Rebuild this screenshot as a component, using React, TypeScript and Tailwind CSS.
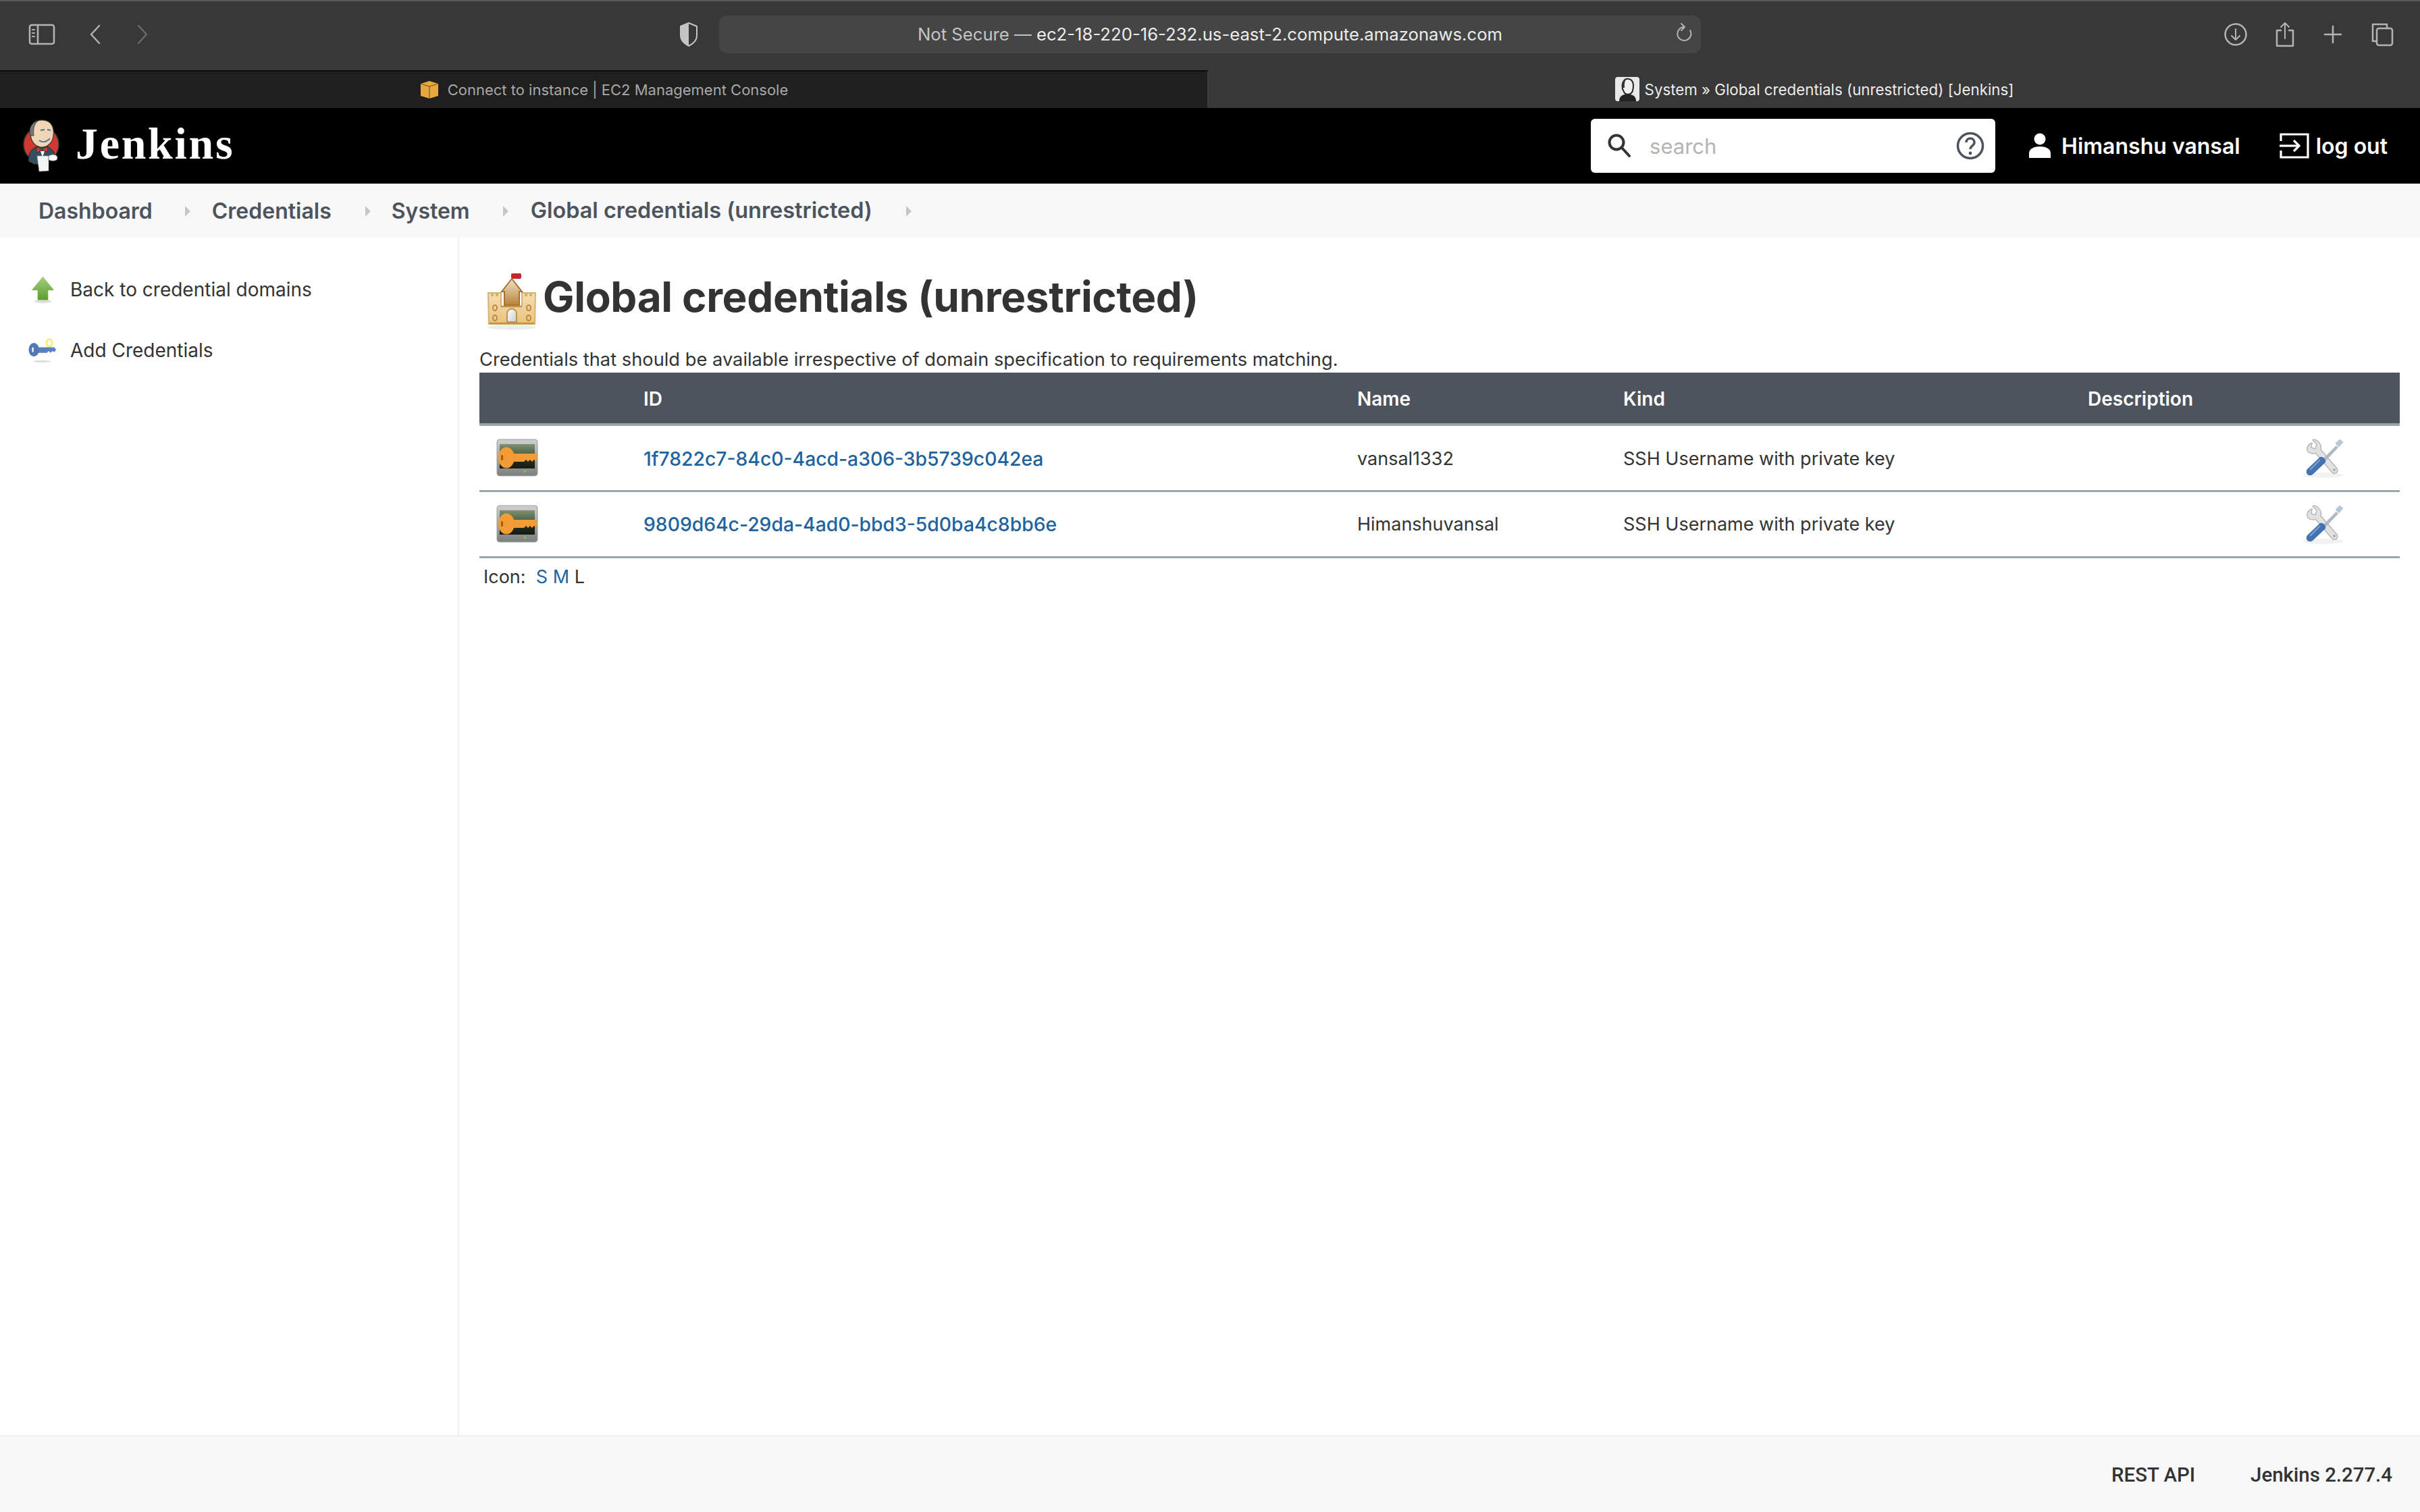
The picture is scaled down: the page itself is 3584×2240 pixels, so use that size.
import React from "react";

const Chev = () => (
  <svg width="8" height="16" viewBox="0 0 8 16" className="shrink-0"><path d="M0 0 L8 8 L0 16 Z" fill="#c4c7ca" /></svg>
);

const Jenkins = ({ w = 54, h = 78 }: { w?: number; h?: number }) => (
  <svg width={w} height={h} viewBox="0 0 54 78">
    <circle cx="27" cy="37" r="26" fill="#d33833" stroke="#3a3a3a" strokeWidth="1.5" />
    <path d="M8 62 C8 48 14 42 22 40 L36 40 C44 44 48 50 47 56 L38 60 L36 68 L16 66 Z" fill="#335061" stroke="#222" strokeWidth="1" />
    <path d="M11 22 C9 8 18 0 30 1 C42 2 47 12 45 24 C44 34 36 42 26 41 C17 39 12 32 11 22 Z" fill="#f0d6b7" stroke="#333" strokeWidth="1.2" />
    <path d="M11 24 C8 14 12 4 24 1 C16 6 15 14 16 24 Z" fill="#777" stroke="#333" strokeWidth="0.8" />
    <path d="M24 31 C29 35 36 33 40 28 M26 16 l6 -1 M36 15 l5 1" stroke="#49728b" strokeWidth="1.8" fill="none" />
    <path d="M20 40 L28 45 L36 40 L37 48 L28 46 L20 49 Z" fill="#d33833" stroke="#222" strokeWidth="0.6" />
    <path d="M26 47 L32 47 L29 56 Z" fill="#fff" />
    <path d="M21 54 L38 54 L38 76 L24 77 Z" fill="#f4f4f4" stroke="#999" strokeWidth="0.6" />
    <path d="M38 54 C44 50 52 52 51 58 C50 62 43 62 38 60 Z" fill="#fff" stroke="#666" strokeWidth="0.8" />
  </svg>
);

const BackArrow = () => (
  <svg width="42" height="44" viewBox="0 0 42 44" className="blur-[0.5px]">
    <defs>
      <linearGradient id="ag" x1="0" y1="0" x2="0" y2="1"><stop offset="0" stopColor="#a5cf7f" /><stop offset="1" stopColor="#5c9e2e" /></linearGradient>
    </defs>
    <ellipse cx="21" cy="40" rx="13" ry="2.5" fill="#ddd" />
    <path d="M21 2 L38 23 L29 23 L29 38 L13 38 L13 23 L4 23 Z" fill="url(#ag)" />
  </svg>
);

const KeyIcon = () => (
  <svg width="46" height="44" viewBox="0 0 46 44" className="blur-[0.5px]">
    <ellipse cx="22" cy="40" rx="14" ry="1.8" fill="#ddd" />
    <ellipse cx="34" cy="10" rx="4.5" ry="6" fill="#fff" stroke="#f4ee70" strokeWidth="3" />
    <path d="M14 17 L42 17 L45 21 L42 25 L39 23 L36 26 L33 23 L30 26 L14 26 Z" fill="#5a82c0" />
    <ellipse cx="9" cy="21" rx="8.5" ry="11" fill="#5378b6" />
    <rect x="6" y="17" width="2.5" height="8" rx="1.2" fill="#fff" />
  </svg>
);

const Castle = () => (
  <svg width="76" height="88" viewBox="0 0 76 88" className="blur-[0.5px]">
    <defs>
      <linearGradient id="cg" x1="0" y1="0" x2="0" y2="1"><stop offset="0" stopColor="#f2e4cc" /><stop offset="1" stopColor="#b98238" /></linearGradient>
      <linearGradient id="cb" x1="0" y1="0" x2="0" y2="1"><stop offset="0" stopColor="#f5deb0" /><stop offset="1" stopColor="#e9c47f" /></linearGradient>
      <linearGradient id="cd" x1="0" y1="0" x2="1" y2="1"><stop offset="0" stopColor="#ffffff" /><stop offset="1" stopColor="#c9cdd0" /></linearGradient>
    </defs>
    <ellipse cx="38" cy="83" rx="36" ry="3.5" fill="#eceeed" />
    <rect x="37" y="3" width="15" height="8" rx="2" fill="#c8242a" />
    <path d="M38 11 L53 30 L49 30 L49 50 L27 50 L27 30 L23 30 Z" fill="url(#cg)" stroke="#a8732d" strokeWidth="2" />
    <path d="M3 32 L8 32 L8 36 L10 36 L10 32 L15 32 L15 36 L17 36 L17 32 L22 32 L22 52 L53 52 L53 32 L58 32 L58 36 L60 36 L60 32 L65 32 L65 36 L67 36 L67 32 L73 32 L72 78 L4 78 Z" fill="url(#cb)" stroke="#dcb06a" strokeWidth="2" />
    <path d="M22 52 L53 52" stroke="#c4924a" strokeWidth="2.5" />
    <path d="M5 77 L71 77" stroke="#c4924a" strokeWidth="2.5" />
    <path d="M31 75 L31 63 C31 53 45 53 45 63 L45 75 Z" fill="url(#cd)" stroke="#c4924a" strokeWidth="2" />
    <ellipse cx="13" cy="54" rx="3" ry="4" fill="none" stroke="#ba8a43" strokeWidth="2" />
    <ellipse cx="63" cy="54" rx="3" ry="4" fill="none" stroke="#ba8a43" strokeWidth="2" />
    <ellipse cx="13" cy="69" rx="3" ry="4" fill="none" stroke="#ba8a43" strokeWidth="2" />
    <ellipse cx="63" cy="69" rx="3" ry="4" fill="none" stroke="#ba8a43" strokeWidth="2" />
  </svg>
);

const SshKey = ({ id }: { id: string }) => (
  <svg width="62" height="56" viewBox="0 0 62 56" className="blur-[0.5px]">
    <defs>
      <linearGradient id={`sg${id}`} x1="0" y1="0" x2="0" y2="1"><stop offset="0" stopColor="#7f9172" /><stop offset="0.35" stopColor="#566a4c" /><stop offset="0.6" stopColor="#26321f" /><stop offset="1" stopColor="#141a10" /></linearGradient>
      <linearGradient id={`sf${id}`} x1="0" y1="0" x2="0" y2="1"><stop offset="0" stopColor="#cfcfcf" /><stop offset="1" stopColor="#7b807d" /></linearGradient>
    </defs>
    <rect x="1" y="1" width="60" height="54" rx="4" fill={`url(#sf${id})`} stroke="#9b9d9c" strokeWidth="1" />
    <rect x="5" y="8" width="52" height="36" fill={`url(#sg${id})`} />
    <rect x="41" y="47" width="3" height="3" fill="#8db56b" />
    <path d="M18 22 L60 22 L61 28 L59 33 L56 31 L53 34 L50 31 L47 34 L44 31 L41 34 L18 34 Z" fill="#f39b34" />
    <ellipse cx="15" cy="28" rx="12" ry="15.5" fill="#f39b34" />
    <rect x="7" y="24" width="3" height="8" rx="1.5" fill="#9a5d18" />
  </svg>
);

const Tools = () => (
  <svg width="62" height="62" viewBox="0 0 62 62" className="blur-[0.6px]">
    <ellipse cx="31" cy="55" rx="30" ry="4" fill="#f2f2f2" />
    <path d="M14 7 C8 9 5 15 8 20 C11 23 16 24 19 22 L43 50 C47 55 54 51 51 45 L27 17 C29 11 24 3 17 2 L15 3 L21 9 L19 16 L13 14 Z" fill="#e2e2e2" stroke="#b9b9b9" strokeWidth="1.5" />
    <circle cx="47" cy="47" r="2" fill="#aaa" />
    <path d="M29 32 L50 11 L53 14 L32 36 Z" fill="#aeb9c4" />
    <path d="M49 8 L55 2 L60 6 L54 13 Z" fill="#b4c8dc" stroke="#9ab" strokeWidth="0.5" />
    <path d="M7 46 L26 28 C30 27 35 31 34 36 L15 54 C9 58 3 52 7 46 Z" fill="#4374b0" />
    <path d="M11 47 L26 32" stroke="#7ba6d4" strokeWidth="2" />
  </svg>
);

const IconGlyph = ({ children, w, h }: { children: React.ReactNode; w: number; h: number }) => (
  <svg width={w} height={h} viewBox={`0 0 ${w} ${h}`} fill="none" stroke="#b4b4b4" strokeWidth="2.5" strokeLinecap="round" strokeLinejoin="round">{children}</svg>
);

const rows = [
  { id: "1f7822c7-84c0-4acd-a306-3b5739c042ea", name: "vansal1332" },
  { id: "9809d64c-29da-4ad0-bbd3-5d0ba4c8bb6e", name: "Himanshuvansal" },
];

export default function App() {
  return (
    <div className="w-[3584px] h-[2240px] flex flex-col bg-white overflow-hidden text-[#333] font-['Inter','Liberation_Sans',sans-serif]">
      {/* browser toolbar */}
      <div className="h-[104px] bg-[#383838] border-t-2 border-[#5a5a5a] flex items-center pl-[42px] pr-[39px] shrink-0">
        <div className="flex items-center w-[1023px] -mt-[4px]">
          <IconGlyph w={40} h={32}>
            <rect x="2" y="2" width="36" height="28" rx="3" />
            <path d="M14 2 L14 30" />
            <path d="M6 9 L9 9 M6 14 L9 14 M6 19 L9 19" strokeWidth="2" />
          </IconGlyph>
          <div className="ml-[50px]">
            <IconGlyph w={18} h={30}><path d="M15 2 L3 15 L15 28" /></IconGlyph>
          </div>
          <div className="ml-[52px]">
            <svg width="18" height="30" viewBox="0 0 18 30" fill="none" stroke="#6a6a6a" strokeWidth="2.5" strokeLinecap="round" strokeLinejoin="round"><path d="M3 2 L15 15 L3 28" /></svg>
          </div>
          <div className="ml-auto mr-[31px]">
            <svg width="28" height="36" viewBox="0 0 28 36"><path d="M14 1 L26 6 L26 20 C26 27 20 32 14 35 C8 32 2 27 2 20 L2 6 Z" fill="#383838" stroke="#c4c4c4" strokeWidth="2" /><path d="M14 1 L2 6 L2 20 C2 27 8 32 14 35 Z" fill="#c4c4c4" /></svg>
          </div>
        </div>
        <div className="w-[1454px] h-[56px] rounded-[12px] bg-[#454545] flex items-center relative -mt-[4px]">
          <div className="flex-1 text-center text-[25.7px] whitespace-nowrap">
            <span className="text-[#c4c4c4]">Not Secure — </span><span className="text-[#ececec]">ec2-18-220-16-232.us-east-2.compute.amazonaws.com</span>
          </div>
          <div className="absolute right-[13px] top-[10px]">
            <IconGlyph w={24} h={30}>
              <path d="M12 7 A10 10 0 1 0 21 12" strokeWidth="2" />
              <path d="M8 2 L13 7 L8 12" strokeWidth="2" />
            </IconGlyph>
          </div>
        </div>
        <div className="flex-1 flex items-center justify-end gap-[41px] -mt-[4px]">
          <IconGlyph w={34} h={34}><circle cx="17" cy="17" r="15.5" /><path d="M17 9 L17 25 M11 19 L17 25 L23 19" strokeWidth="2" /></IconGlyph>
          <IconGlyph w={30} h={38}><path d="M9 13 L3 13 L3 36 L27 36 L27 13 L21 13" /><path d="M15 2 L15 25 M9 8 L15 2 L21 8" strokeWidth="2" /></IconGlyph>
          <IconGlyph w={30} h={30}><path d="M15 3 L15 27 M3 15 L27 15" /></IconGlyph>
          <IconGlyph w={34} h={36}><path d="M8 28 L3 28 L3 3 L24 3 L24 9" /><rect x="9" y="9" width="23" height="25" rx="3" /></IconGlyph>
        </div>
      </div>

      {/* tabs */}
      <div className="h-[56px] flex shrink-0 text-[22px]">
        <div className="w-[1790px] bg-[#1f1f1f] border-t-2 border-[#0d0d0d] border-r-2 border-r-[#3d3d3d] flex items-center justify-center gap-[12px] text-[#a8a8a8]">
          <svg width="30" height="28" viewBox="0 0 30 28"><path d="M2 5 L15 1 L28 5 L28 23 L15 27 L2 23 Z" fill="#e7a93c" /><path d="M2 5 L15 9 L28 5 M15 9 L15 27" stroke="#7a5a1c" strokeWidth="1.2" fill="none" /></svg>
          <span>Connect to instance | EC2 Management Console</span>
        </div>
        <div className="flex-1 bg-[#383838] flex items-center justify-center gap-[8px] text-[#ececec] text-[22.3px]">
          <div className="w-[36px] h-[36px] rounded-[4px] bg-[#e8e8e8] overflow-hidden flex justify-center items-end">
            <svg width="30" height="36" viewBox="0 0 30 36"><path d="M8 18 C6 6 12 2 17 3 C24 4 25 12 23 20 C22 26 14 27 11 24 Z" fill="#eee" stroke="#222" strokeWidth="2" /><path d="M3 36 C3 28 9 26 12 26 L20 26 C25 27 28 30 28 36 Z" fill="#222" /><path d="M8 16 C6 8 9 4 14 3 C10 7 11 12 11 16Z" fill="#333" /></svg>
          </div>
          <span className="mt-[1px]">System » Global credentials (unrestricted) [Jenkins]</span>
        </div>
      </div>

      {/* jenkins header */}
      <div className="h-[112px] bg-black flex items-center shrink-0 pl-[34px] pr-[48px] text-white">
        <Jenkins />
        <span className="ml-[24px] -mt-[6px] text-[66px] leading-none font-bold font-['Liberation_Serif',serif] tracking-[2.7px]">Jenkins</span>
        <div className="ml-auto w-[599px] h-[80px] bg-white rounded-[6px] flex items-center pl-[22px] pr-[16px]">
          <svg width="40" height="40" viewBox="0 0 40 40" fill="none" stroke="#333" strokeWidth="4" strokeLinecap="round"><circle cx="16" cy="15" r="10.5" /><path d="M24 23 L35 35" /></svg>
          <span className="ml-[25px] mt-[2px] text-[31px] text-[#b4b4b4]">search</span>
          <svg className="ml-auto" width="42" height="42" viewBox="0 0 42 42" fill="none"><circle cx="21" cy="21" r="18.5" stroke="#4d545d" strokeWidth="3.5" /><path d="M15 16 C15 8 27 8 27 16 C27 21 21 21 21 26" stroke="#4d545d" strokeWidth="3.5" /><circle cx="21" cy="32" r="2.4" fill="#4d545d" /></svg>
        </div>
        <div className="ml-[50px] flex items-center gap-[16px] text-[32px] font-semibold">
          <svg width="32" height="38" viewBox="0 0 32 38" fill="#fff"><circle cx="16" cy="9" r="8.5" /><path d="M0 37 L0 30 C0 23 8 20 16 20 C24 20 32 23 32 30 L32 37 Z" /></svg>
          <span className="mt-[1px]">Himanshu vansal</span>
        </div>
        <div className="ml-[58px] flex items-center gap-[10px] text-[32px] font-semibold">
          <svg width="44" height="40" viewBox="0 0 44 40" fill="none" stroke="#fff" strokeWidth="3.2"><path d="M2 13 L2 3 L42 3 L42 37 L2 37 L2 27" /><path d="M0 20 L28 20" /><path d="M21 12 L29 20 L21 28" /></svg>
          <span className="mt-[1px]">log out</span>
        </div>
      </div>

      {/* breadcrumb */}
      <div className="h-[80px] pt-[1px] bg-[#f8f8f8] flex items-center shrink-0 pl-[57px] text-[32px] font-semibold text-[#4d545d]">
        <span>Dashboard</span>
        <span className="ml-[48px]"><Chev /></span>
        <span className="ml-[32px]">Credentials</span>
        <span className="ml-[50px]"><Chev /></span>
        <span className="ml-[31px]">System</span>
        <span className="ml-[49px]"><Chev /></span>
        <span className="ml-[33px] text-[32.4px]">Global credentials (unrestricted)</span>
        <span className="ml-[50px]"><Chev /></span>
      </div>

      {/* body */}
      <div className="flex-1 flex min-h-0">
        <div className="w-[680px] shrink-0 border-r-2 border-[#f0f0f0] pt-[55px] pl-[40px] text-[28px]">
          <div className="h-[44px] flex items-center gap-[20px]"><div className="w-[44px] flex justify-center pl-[3px]"><BackArrow /></div><span>Back to credential domains</span></div>
          <div className="h-[44px] mt-[46px] flex items-center gap-[20px]"><div className="w-[44px] flex justify-start pl-[2px]"><KeyIcon /></div><span>Add Credentials</span></div>
        </div>
        <div className="flex-1 pl-[30px] pr-[30px] min-w-0">
          <div className="flex items-center h-[100px] mt-[38px] pl-[10px] gap-[8px]">
            <div className="mt-[12px]"><Castle /></div>
            <h1 className="text-[62px] font-bold text-[#333] leading-none tracking-[-0.35px]">Global credentials (unrestricted)</h1>
          </div>
          <div className="text-[27.27px] mt-[22px] leading-[42px] h-[40px]">Credentials that should be available irrespective of domain specification to requirements matching.</div>
          <table className="w-full table-fixed border-collapse text-[27px]">
            <thead>
              <tr className="h-[77px] bg-[#4d545d] text-white border-b-[4px] border-[#9aa5ac] text-[28px]">
                <th className="w-[243px]"></th>
                <th className="w-[1057px] text-left font-semibold pt-[2px]">ID</th>
                <th className="w-[394px] text-left font-semibold pt-[2px]">Name</th>
                <th className="w-[688px] text-left font-semibold pt-[2px]">Kind</th>
                <th className="text-left font-semibold pt-[2px]">Description</th>
                <th className="w-[144px]"></th>
              </tr>
            </thead>
            <tbody>
              {rows.map((r, i) => (
                <tr key={r.id} className="h-[98px] border-b-[3px] border-[#9aa5ac]">
                  <td className="pl-[25px]"><SshKey id={String(i)} /></td>
                  <td className="font-medium text-[#20639e] text-[28.3px] pt-[3px]">{r.id}</td>
                  <td className="pt-[3px]">{r.name}</td>
                  <td className="pt-[3px]">SSH Username with private key</td>
                  <td></td>
                  <td className="pt-[3px]"><Tools /></td>
                </tr>
              ))}
            </tbody>
          </table>
          <div className="pl-[6px] mt-[8px] text-[27px] leading-[40px] whitespace-pre">
            Icon:{"  "}<span className="text-[#20639e]">S</span> <span className="text-[#20639e]">M</span> L
          </div>
        </div>
      </div>

      {/* footer */}
      <div className="h-[114px] pt-[2px] bg-[#f8f8f8] border-t-2 border-[#eceef0] shrink-0 flex items-center justify-end pr-[41px] text-[29.4px] font-['Roboto','Inter',sans-serif] font-medium gap-[82px]">
        <span>REST API</span>
        <span>Jenkins 2.277.4</span>
      </div>
    </div>
  );
}
